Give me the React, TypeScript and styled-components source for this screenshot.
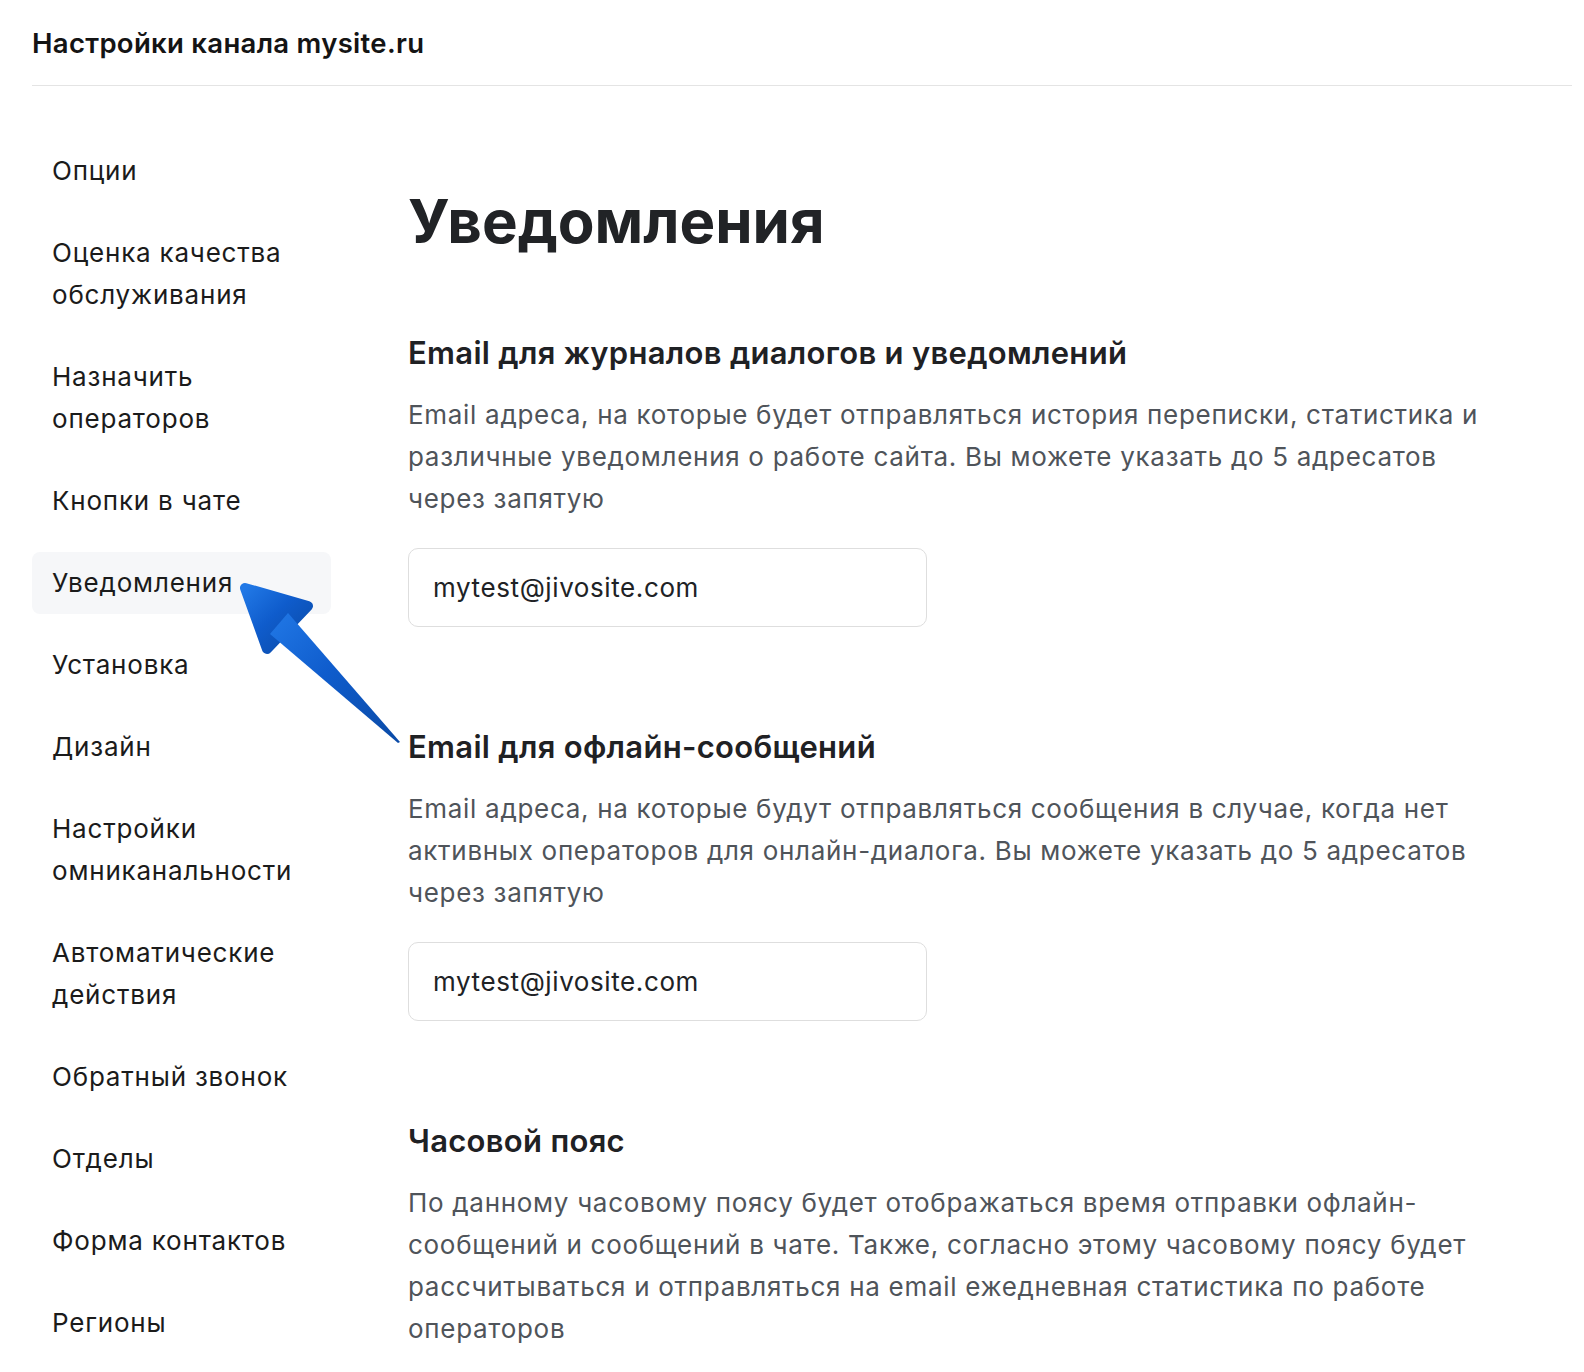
import styled, { createGlobalStyle } from "styled-components"

const GlobalStyle = createGlobalStyle`
  html, body {
    margin: 0;
    padding: 0;
    background: #ffffff;
  }
  body {
    font-family: Inter, "Noto Sans", sans-serif;
    color: #1b1b1b;
  }
  * {
    box-sizing: border-box;
  }
`

const Page = styled.div`
  position: relative;
  width: 1584px;
  min-height: 1372px;
  padding: 0 12px 0 32px;
  overflow: hidden;
`

const Header = styled.header`
  display: flex;
  align-items: center;
  height: 86px;
  border-bottom: 1px solid #e4e4e4;
`

const HeaderTitle = styled.h1`
  margin: 0;
  font-size: 27.5px;
  font-weight: 600;
  color: #141414;
  letter-spacing: 0.3px;
`

const Body = styled.div`
  display: grid;
  grid-template-columns: 299px 1fr;
  column-gap: 77px;
  align-items: start;
  padding-top: 54px;
`

const SideNav = styled.nav`
  display: flex;
  flex-direction: column;
  gap: 20px;
`

const NavItem = styled.a<{ $active?: boolean }>`
  display: block;
  padding: 10px 20px;
  border-radius: 8px;
  font-size: 26px;
  line-height: 42px;
  letter-spacing: 0.8px;
  color: #1b1b1b;
  text-decoration: none;
  background: ${(p) => (p.$active ? "#f6f7f9" : "transparent")};
  cursor: pointer;
`

const Content = styled.main`
  padding-top: 45px;
  max-width: 1096px;
`

const PageTitle = styled.h2`
  margin: 0 0 76px;
  font-size: 60px;
  line-height: 72px;
  font-weight: 700;
  color: #212326;
`

const Section = styled.section`
  & + & {
    margin-top: 100px;
  }
`

const SectionTitle = styled.h3`
  margin: 0 0 21px;
  font-size: 31px;
  line-height: 40px;
  font-weight: 600;
  color: #1f2124;
  letter-spacing: 0.3px;
`

const Text = styled.p`
  margin: 0;
  font-size: 26px;
  line-height: 42px;
  letter-spacing: 0.7px;
  color: #4f545a;
`

const EmailInput = styled.input`
  display: block;
  margin-top: 28px;
  width: 519px;
  height: 79px;
  padding: 0 24px;
  border: 1.5px solid #dedede;
  border-radius: 10px;
  font-family: Inter, "Noto Sans", sans-serif;
  font-size: 26px;
  letter-spacing: 0.6px;
  color: #202225;
  outline: none;
  background: #fff;
`

const Pointer = styled.svg`
  position: absolute;
  left: 230px;
  top: 570px;
  width: 180px;
  height: 185px;
  pointer-events: none;
`

const navItems = [
  "Опции",
  "Оценка качества обслуживания",
  "Назначить операторов",
  "Кнопки в чате",
  "Уведомления",
  "Установка",
  "Дизайн",
  "Настройки омниканальности",
  "Автоматические действия",
  "Обратный звонок",
  "Отделы",
  "Форма контактов",
  "Регионы",
]

const sections = [
  {
    title: "Email для журналов диалогов и уведомлений",
    text: "Email адреса, на которые будет отправляться история переписки, статистика и различные уведомления о работе сайта. Вы можете указать до 5 адресатов через запятую",
    email: "mytest@jivosite.com",
  },
  {
    title: "Email для офлайн-сообщений",
    text: "Email адреса, на которые будут отправляться сообщения в случае, когда нет активных операторов для онлайн-диалога. Вы можете указать до 5 адресатов через запятую",
    email: "mytest@jivosite.com",
  },
  {
    title: "Часовой пояс",
    text: "По данному часовому поясу будет отображаться время отправки офлайн-сообщений и сообщений в чате. Также, согласно этому часовому поясу будет рассчитываться и отправляться на email ежедневная статистика по работе операторов",
  },
]

const App = () => {
  return (
    <Page>
      <GlobalStyle />
      <Header>
        <HeaderTitle>Настройки канала mysite.ru</HeaderTitle>
      </Header>
      <Body>
        <SideNav>
          {navItems.map((item) => (
            <NavItem key={item} $active={item === "Уведомления"}>
              {item}
            </NavItem>
          ))}
        </SideNav>
        <Content>
          <PageTitle>Уведомления</PageTitle>
          {sections.map((s) => (
            <Section key={s.title}>
              <SectionTitle>{s.title}</SectionTitle>
              <Text>{s.text}</Text>
              {s.email && <EmailInput defaultValue={s.email} />}
            </Section>
          ))}
        </Content>
      </Body>
      <Pointer viewBox="0 0 180 185">
        <defs>
          <linearGradient id="arrowFill" x1="0" y1="0" x2="1" y2="1">
            <stop offset="0" stopColor="#2178e6" />
            <stop offset="0.45" stopColor="#0f5ccc" />
            <stop offset="1" stopColor="#0a4aa6" />
          </linearGradient>
        </defs>
        <path
          d="M15 18 L78 36 L37 79 Z"
          fill="url(#arrowFill)"
          stroke="url(#arrowFill)"
          strokeWidth="10"
          strokeLinejoin="round"
        />
        <path d="M58 43 L170 172 L168 173 L40 64 Z" fill="url(#arrowFill)" />
      </Pointer>
    </Page>
  )
}

export default App
